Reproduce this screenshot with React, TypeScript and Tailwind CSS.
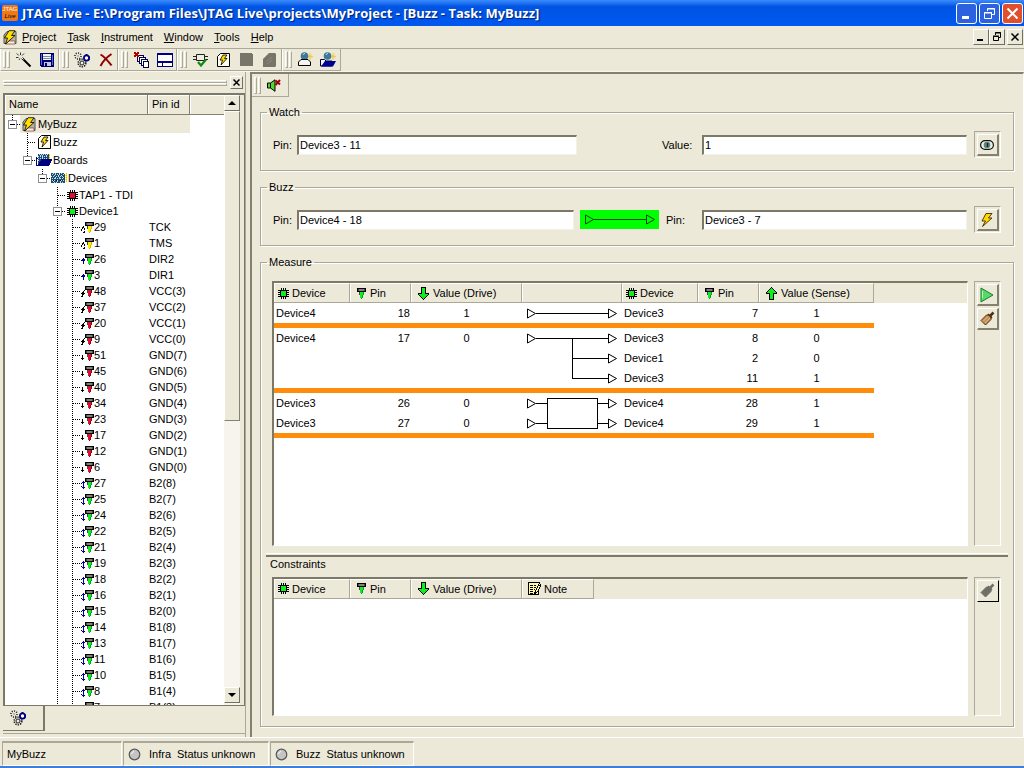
import type { ReactNode } from 'react'

const palette: Record<string, string> = {
  k: '#000000',
  w: '#ffffff',
  g: '#10ee20',
  d: '#0a9a2a',
  r: '#e0102c',
  m: '#900018',
  y: '#fff200',
  o: '#e0b000',
  n: '#000080',
  b: '#3c64c8',
  t: '#18506e',
  s: '#808080',
  x: '#484848',
  l: '#c8d8f0',
  p: '#fff8a0',
}

// Small bitmap icon, one letter per pixel
function Sprite({ rows }: { rows: string[] }) {
  const width = Math.max(...rows.map((r) => r.length))
  return (
    <svg
      width={width}
      height={rows.length}
      viewBox={`0 0 ${width} ${rows.length}`}
      shapeRendering="crispEdges"
      className="shrink-0"
      aria-hidden="true"
    >
      {rows.flatMap((row, y) =>
        [...row].map((ch, x) =>
          palette[ch] ? <rect key={`${x}-${y}`} x={x} y={y} width={1} height={1} fill={palette[ch]} /> : null
        )
      )}
    </svg>
  )
}

const chipRows = (c: string) =>
  [
    '...k.k.k...',
    '...k.k.k...',
    'kkkkkkkkkkk',
    '..kCCCCCk..',
    'kkkCCCCCkkk',
    '..kCCCCCk..',
    'kkkCCCCCkkk',
    '..kCCCCCk..',
    'kkkkkkkkkkk',
    '...k.k.k...',
    '...k.k.k...',
  ].map((r) => r.replace(/C/g, c))

const pinBody = (c: string, d: string) =>
  [
    'kkkkkkkkk',
    'kxsssssxk',
    'kxsssssxk',
    'kkkkkkkkk',
    '..xCCCD..',
    '..xCCCD..',
    '..xCCCD..',
    '...CCD...',
    '...CCD...',
    '...CCD...',
    '....D....',
  ].map((r) => r.replace(/C/g, c).replace(/D/g, d))

type PinKind = 'clock' | 'in' | 'power' | 'ground' | 'both'

const pinMarks: Record<PinKind, string[]> = {
  clock: ['....', '....', '....', '....', '..k.', '.kk.', '.k.k', 'k..k', 'k...', '...k', '..kk'],
  in: ['....', '....', '....', '....', '..n.', '.nnn', 'nnnn', '..n.', '..n.', '..n.', '....'],
  power: ['....', '....', '....', '....', '...k', '..k.', '.kk.', 'kkkk', '.kk.', '.k..', 'kk..'],
  ground: ['....', '....', '....', '....', '....', '.k..', '.k..', '.k..', 'kkk.', '.k..', '....'],
  both: ['....', '....', '....', '..n.', '.nnn', 'n.n.', '..n.', '..n.', 'n.n.', '.nnn', '..n.'],
}

const pinColors: Record<PinKind, [string, string]> = {
  clock: ['y', 'o'],
  in: ['g', 'd'],
  power: ['r', 'm'],
  ground: ['r', 'm'],
  both: ['g', 'd'],
}

function PinIcon({ kind }: { kind: PinKind }) {
  const body = pinBody(...pinColors[kind])
  return <Sprite rows={pinMarks[kind].map((r, i) => r + body[i])} />
}

const arrowDown = [
  '...kkkkk...',
  '...kgggk...',
  '...kgggk...',
  '...kgggk...',
  '...kgggk...',
  '...kgggk...',
  'kkkkgggkkkk',
  'kgggggggggk',
  '.kgggggggk.',
  '..kgggggk..',
  '...kgggk...',
  '....kgk....',
  '.....k.....',
]

const noteRows = [
  'kkkkkkkkkkkk.',
  'kppppppppppk.',
  'kpppppppppkpk',
  'kpkkkpkkppkkk',
  'kppppppppkppk',
  'kpkkkpkkpkpk.',
  'kpppppppkppk.',
  'kpkkkpkpkpk..',
  'kppppppkppk..',
  'kpkkkppkpkk..',
  'kpppppkkkpk..',
  'kpkkkpkkppk..',
  'kkkkkkkkkkk..',
]

const boardRows = [
  'ttltltttltltt..o',
  'tlttltltltttlt.y',
  'tttltttlttltttyo',
  'ltlttltltltltt.y',
  'ttttltttltttltyo',
  'tltlltltlltltt.y',
  'ttttttttttttttyo',
  'tlkltklttkltlt.y',
  'ttltttlttltttt.o',
  'tttltltttltltt..',
]

const boardsRows = [
  '..tltltltltlty..',
  '..ttltltttltto..',
  '..ltltltltltty..',
  'n.ttttltttttto..',
  'nnltltltltltty..',
  'nwtttnnnnnnnnnnn',
  'nwlttnnnnnnnnnnn',
  'nwttnnnnnnnnnnn.',
  'nwtnnnnnnnnnnnn.',
  'nwtnnnnnnnnnnn..',
  'nwnnnnnnnnnnnn..',
  'nnnnnnnnnnnnn...',
]

function TaskIcon() {
  return (
    <svg width="13" height="14" viewBox="0 0 13 14" className="shrink-0" aria-hidden="true">
      <path d="M3.500 .5H12.500V13.500H.5V3.500Z" fill="#fffef0" stroke="#000" />
      <path d="M6 2h4L7.500 5.500H10L4 12l1.500-5H3Z" fill="#ffd800" stroke="#000" strokeWidth=".8" />
    </svg>
  )
}

function ProjectIcon() {
  return (
    <svg width="14" height="15" viewBox="0 0 14 15" className="shrink-0" aria-hidden="true">
      <path d="M4 1.500h9v12H1V5Z" fill="#b8b4a4" stroke="#55524a" />
      <path d="M6 11h6v3H3Z" fill="#f8f0e8" stroke="#702020" strokeWidth=".6" />
      <path d="M6 .7h6L8.500 5.500h3.500L2.500 14l2-6H1.500Z" fill="#ffe000" stroke="#000" strokeWidth=".8" />
    </svg>
  )
}

function GearsIcon() {
  return (
    <svg width="17" height="16" viewBox="0 0 17 16" className="shrink-0" aria-hidden="true">
      <circle cx="4" cy="4" r="3" fill="none" stroke="#222" strokeWidth="1.600" strokeDasharray="1 1.300" />
      <rect x="3.500" y="3.500" width="1" height="1" fill="#222" />
      <circle cx="8" cy="11" r="3.800" fill="none" stroke="#222" strokeWidth="1.600" strokeDasharray="1.400 1" />
      <circle cx="8" cy="11" r="2" fill="#eee" stroke="#222" />
      <circle cx="12.500" cy="6" r="2.600" fill="#fff" stroke="#000080" strokeWidth="1.800" />
      <path d="M11.500 2.500h2M15.500 4.500v3" stroke="#000080" />
    </svg>
  )
}

function WandIcon() {
  return (
    <svg width="16" height="16" viewBox="0 0 16 16" aria-hidden="true">
      <path d="M6 6l8.500 8.500" stroke="#000" strokeWidth="2" />
      <path d="M4.500 .5v2.500M.8 1.500l2 2M0 5.500h2.500M8 1.500l-2 2M3 8l.8-1.500" stroke="#333" />
      <path d="M5.500 5.500l2 2" stroke="#fff" />
    </svg>
  )
}

function SaveIcon() {
  return (
    <svg width="14" height="14" viewBox="0 0 14 14" shapeRendering="crispEdges" aria-hidden="true">
      <path d="M0 0h14v14H1l-1-1Z" fill="#000070" />
      <path d="M1 1h1v11H1zM12 2h1v10h-1z" fill="#5070d0" />
      <path d="M3 1h8v6H3z" fill="#f4f4f4" />
      <path d="M3 3h8v1H3zM3 5h8v1H3z" fill="#7c8cb0" />
      <path d="M4 9h7v4H4z" fill="#c0c8e0" />
      <path d="M5 10h2v3H5z" fill="#000070" />
    </svg>
  )
}

function CrossIcon() {
  return (
    <svg width="14" height="14" viewBox="0 0 14 14" aria-hidden="true">
      <path d="M1.500 1.500C6 4 9 8 12.500 12.500M12.500 1C8 4 4 8 1.500 13" fill="none" stroke="#900000" strokeWidth="2" />
    </svg>
  )
}

function CascadeIcon() {
  return (
    <svg width="16" height="16" viewBox="0 0 16 16" shapeRendering="crispEdges" aria-hidden="true">
      <g fill="#fff" stroke="#000050">
        <path d="M3.500 3.500h6v6h-6z" />
        <path d="M5.500 5.500h6v6h-6z" />
        <path d="M7.500 7.500h6v6h-6z" />
        <path d="M9.500 9.500h5v6h-5z" />
      </g>
      <path d="M0 0h2v1h1V0h2v2H4v1h1v2H3V4H2v1H0V3h1V2H0Z" fill="#b00000" />
    </svg>
  )
}

function PanesIcon() {
  return (
    <svg width="16" height="14" viewBox="0 0 16 14" shapeRendering="crispEdges" aria-hidden="true">
      <path d="M0 0h16v14H0z" fill="#000080" />
      <path d="M1 2h14v6H1zM1 10h4v3H1zM6 10h9v3H6z" fill="#fff" />
    </svg>
  )
}

function CheckChipIcon() {
  return (
    <svg width="15" height="14" viewBox="0 0 15 14" aria-hidden="true">
      <path d="M0 3.500h15M0 6.500h3M12 6.500h3" stroke="#222" />
      <path d="M3.500 1.500h8v6h-8z" fill="#e8f0e0" stroke="#222" />
      <path d="M5 9l3 3.500L13 6.500" fill="none" stroke="#108a10" strokeWidth="2.200" />
    </svg>
  )
}

function ImportIcon({ open }: { open?: boolean }) {
  return (
    <svg width="17" height="15" viewBox="0 0 17 15" aria-hidden="true">
      <path d="M13 1v7M10 4.500h6M11 2.500l4 4M15 2.500l-4 4" stroke="#f0c840" strokeWidth=".9" />
      <circle cx="7.500" cy="4" r="3.800" fill="#3c7898" />
      <path d="M6 3a2 2 0 0 1 2-1.500" stroke="#b8dce8" fill="none" />
      {open ? (
        <>
          <path d="M.5 14V7.500h4L6 9h6v5Z" fill="#f4f4f4" stroke="#000040" />
          <path d="M1 14.500L5 9h11l-3 5.500Z" fill="#000090" />
        </>
      ) : (
        <path d="M1.500 13.500V10L4 7.500h7l2.500 2.500v3.500Z" fill="#f4f4f4" stroke="#000" />
      )}
    </svg>
  )
}

function MuteIcon() {
  return (
    <svg width="15" height="13" viewBox="0 0 15 13" aria-hidden="true">
      <path d="M.5 4h3L8 .8v11.500L3.500 9h-3Z" fill="#50d830" stroke="#000" />
      <path d="M3.500 4v5" stroke="#000" />
      <path d="M8.500 1.500l4.500 4M13 1l-4.500 5" stroke="#a00010" strokeWidth="2" />
    </svg>
  )
}

function EyeIcon() {
  return (
    <svg width="14" height="10" viewBox="0 0 14 10" aria-hidden="true">
      <rect x=".6" y=".6" width="12.800" height="8.800" rx="4.400" fill="#e8f0e8" stroke="#111" strokeWidth="1.200" />
      <circle cx="7" cy="5" r="3.300" fill="#5c8478" />
      <path d="M7.500 3v4" stroke="#102820" strokeWidth="1.400" />
    </svg>
  )
}

function BoltIcon() {
  return (
    <svg width="12" height="14" viewBox="0 0 12 14" aria-hidden="true">
      <path d="M5 .5h6L7.500 5H11L1.500 13.500 4.500 8H1Z" fill="#ffd800" stroke="#402800" strokeWidth=".9" />
    </svg>
  )
}

function PlayIcon() {
  return (
    <svg width="14" height="16" viewBox="0 0 14 16" aria-hidden="true">
      <path d="M1 1l12 7-12 7Z" fill="#58d868" stroke="#188028" />
      <path d="M2.500 4v7" stroke="#b8f4c0" />
    </svg>
  )
}

function BrushIcon({ disabled }: { disabled?: boolean }) {
  const fill = disabled ? '#6f6f67' : '#c09058'
  const stroke = disabled ? '#6f6f67' : '#503010'
  return (
    <svg width="15" height="15" viewBox="0 0 15 15" aria-hidden="true">
      <path d="M9.500 5.500L13.500 1.500" stroke={stroke} strokeWidth="2.500" />
      <path d="M1 9.500L6.500 4h3l1.500 1.500v3L5.500 14Z" fill={fill} stroke={stroke} />
      <path d="M8 3l4 4" stroke={stroke} strokeWidth="1.500" />
      {!disabled && <path d="M3 10.500l5-5M5 12l5-5" stroke="#e0b880" />}
    </svg>
  )
}

type Level = {
  label: string
  net?: string
  icon: ReactNode
  depth: number
  guides: boolean[]
  last?: boolean
  expander?: boolean
  tall?: boolean
  selected?: boolean
}

const pins: [string, string, PinKind][] = [
  ['29', 'TCK', 'clock'],
  ['1', 'TMS', 'clock'],
  ['26', 'DIR2', 'in'],
  ['3', 'DIR1', 'in'],
  ['48', 'VCC(3)', 'power'],
  ['37', 'VCC(2)', 'power'],
  ['20', 'VCC(1)', 'power'],
  ['9', 'VCC(0)', 'power'],
  ['51', 'GND(7)', 'ground'],
  ['45', 'GND(6)', 'ground'],
  ['40', 'GND(5)', 'ground'],
  ['34', 'GND(4)', 'ground'],
  ['23', 'GND(3)', 'ground'],
  ['17', 'GND(2)', 'ground'],
  ['12', 'GND(1)', 'ground'],
  ['6', 'GND(0)', 'ground'],
  ['27', 'B2(8)', 'both'],
  ['25', 'B2(7)', 'both'],
  ['24', 'B2(6)', 'both'],
  ['22', 'B2(5)', 'both'],
  ['21', 'B2(4)', 'both'],
  ['19', 'B2(3)', 'both'],
  ['18', 'B2(2)', 'both'],
  ['16', 'B2(1)', 'both'],
  ['15', 'B2(0)', 'both'],
  ['14', 'B1(8)', 'both'],
  ['13', 'B1(7)', 'both'],
  ['11', 'B1(6)', 'both'],
  ['10', 'B1(5)', 'both'],
  ['8', 'B1(4)', 'both'],
  ['7', 'B1(3)', 'both'],
]

const tree: Level[] = [
  { label: 'MyBuzz', icon: <ProjectIcon />, depth: 0, guides: [], last: true, expander: true, tall: true, selected: true },
  { label: 'Buzz', icon: <TaskIcon />, depth: 1, guides: [false], tall: true },
  { label: 'Boards', icon: <Sprite rows={boardsRows} />, depth: 1, guides: [false], last: true, expander: true, tall: true },
  { label: 'Devices', icon: <Sprite rows={boardRows} />, depth: 2, guides: [false, false], last: true, expander: true, tall: true },
  { label: 'TAP1 - TDI', icon: <Sprite rows={chipRows('r')} />, depth: 3, guides: [false, false, false] },
  { label: 'Device1', icon: <Sprite rows={chipRows('g')} />, depth: 3, guides: [false, false, false], expander: true },
  ...pins.map(([label, net, kind]) => ({
    label,
    net,
    icon: <PinIcon kind={kind} />,
    depth: 4,
    guides: [false, false, false, true],
  })),
]

type TreeLinesProps = { line?: boolean; elbow?: boolean; last?: boolean; expander?: boolean; tall?: boolean }

function TreeLines({ line, elbow, last, expander, tall }: TreeLinesProps) {
  const h = tall ? 18 : 16
  const mid = h / 2
  return (
    <svg width="15" height={h} viewBox={`0 0 15 ${h}`} shapeRendering="crispEdges" className="shrink-0" aria-hidden="true">
      {(line || elbow) && <path d={`M7.500 0V${last ? mid : h}`} stroke="#000" strokeDasharray="1 1" />}
      {elbow && <path d={`M8 ${mid + 0.5}H15`} stroke="#000" strokeDasharray="1 1" />}
      {expander && (
        <>
          <rect x="3.500" y={mid - 3.5} width="8" height="8" fill="#fff" stroke="#909090" />
          <path d={`M5 ${mid + 0.5}h5`} stroke="#000" />
        </>
      )}
    </svg>
  )
}

function TreeRow({ item }: { item: Level }) {
  return (
    <li role="treeitem" aria-level={item.depth + 1} className={`flex items-center ${item.tall ? 'h-[18px]' : 'h-4'}`}>
      {item.guides.map((on, i) => (
        <TreeLines key={i} line={on} tall={item.tall} />
      ))}
      <TreeLines elbow last={item.last} expander={item.expander} tall={item.tall} />
      <span className={`flex h-full flex-1 items-center ${item.selected ? 'mr-[34px] bg-[#ece9d8]' : ''}`}>
        <span className={`flex shrink-0 justify-center ${item.tall ? 'w-[18px]' : 'w-[14px]'}`}>{item.icon}</span>
        <span className="flex-1">{item.label}</span>
        {item.net && <span className="w-[75px]">{item.net}</span>}
      </span>
    </li>
  )
}

function Grip() {
  return (
    <span className="mr-px ml-0.5 flex gap-px">
      <span className="h-[17px] w-[3px] border border-l-white border-t-white border-r-[#aca899] border-b-[#aca899]" />
      <span className="h-[17px] w-[3px] border border-l-white border-t-white border-r-[#aca899] border-b-[#aca899]" />
    </span>
  )
}

function ToolGroup({ children }: { children: ReactNode }) {
  return (
    <div className="flex items-center border-r border-b border-[#aca899] border-l border-l-white">
      <Grip />
      {children}
    </div>
  )
}

function ToolButton({ label, children }: { label: string; children: ReactNode }) {
  return (
    <button aria-label={label} className="flex h-5 w-[23px] items-center justify-center first-of-type:ml-px">
      {children}
    </button>
  )
}

function SideButton({ label, children, dark }: { label: string; children: ReactNode; dark?: boolean }) {
  return (
    <button
      aria-label={label}
      className={`flex h-[22px] w-[22px] shrink-0 items-center justify-center border border-t-white border-l-white ${
        dark ? 'border-r-black border-b-black' : 'border-r-2 border-b-2 border-r-[#85816f] border-b-[#85816f]'
      }`}
    >
      {children}
    </button>
  )
}

function SideBar({ children }: { children: ReactNode }) {
  return (
    <div className="flex w-[27px] shrink-0 flex-col items-center gap-0.5 border border-t-[#aca899] border-r-white border-b-white border-l-[#aca899] pt-0.5 pb-px">
      {children}
    </div>
  )
}

function Group({ title, className, children }: { title: string; className: string; children: ReactNode }) {
  return (
    <fieldset
      className={`min-w-0 border border-[#aca899] px-3 pt-3 shadow-[1px_1px_0_#fff,inset_1px_1px_0_#fff] ${className}`}
    >
      <legend className="-ml-[6px] px-0.5 leading-[14px]">{title}</legend>
      {children}
    </fieldset>
  )
}

const field =
  'h-5 min-w-0 border border-t-2 border-l-2 border-t-[#7c7968] border-l-[#7c7968] border-r-[#f4f2e8] border-b-[#f4f2e8] bg-white pl-px outline-none'

function HeadCell({ icon, label, pad }: { icon?: ReactNode; label?: string; pad?: string }) {
  return (
    <th className="h-5 border-t border-r border-b border-[#aca899] border-t-white p-0 text-left font-normal shadow-[inset_1px_0_0_#fff]">
      <span className={`flex items-center ${pad ?? ''}`}>
        {icon}
        {label}
      </span>
    </th>
  )
}

const deviceHead = <HeadCell icon={<Sprite rows={chipRows('g')} />} label="Device" pad="pl-1 gap-[3px]" />
const pinHead = <HeadCell icon={<Sprite rows={pinBody('g', 'd')} />} label="Pin" pad="pl-[7px] gap-1" />
const driveHead = <HeadCell icon={<Sprite rows={arrowDown} />} label="Value (Drive)" pad="pl-[7px] gap-1" />

type Side = [device: string, pin: number, value: number]

const measures: { drive: Side[]; sense: Side[]; wires: string }[] = [
  { drive: [['Device4', 18, 1]], sense: [['Device3', 7, 1]], wires: 'M14 10.500H86' },
  {
    drive: [['Device4', 17, 0]],
    sense: [
      ['Device3', 8, 0],
      ['Device1', 2, 0],
      ['Device3', 11, 1],
    ],
    wires: 'M14 10.500H86M50.500 10V51M50 30.500H86M50 50.500H86',
  },
  {
    drive: [
      ['Device3', 26, 0],
      ['Device3', 27, 0],
    ],
    sense: [
      ['Device4', 28, 1],
      ['Device4', 29, 1],
    ],
    wires: 'M14 10.500H25M76 10.500H86M14 30.500H25M76 30.500H86M25.500 5.500h50v30h-50Z',
  },
]

function Wires({ d, from, to }: { d: string; from: number; to: number }) {
  const rows = Math.max(from, to)
  return (
    <svg width="100" height={rows * 20} viewBox={`0 0 100 ${rows * 20}`} className="block" fill="none" stroke="#000" aria-hidden="true">
      <path d={d} shapeRendering="crispEdges" />
      {Array.from({ length: from }, (_, i) => (
        <path key={`f${i}`} d={`M5.500 ${i * 20 + 6}v9l8-4.500Z`} />
      ))}
      {Array.from({ length: to }, (_, i) => (
        <path key={`t${i}`} d={`M86.500 ${i * 20 + 6}v9l8-4.500Z`} />
      ))}
    </svg>
  )
}

function SideCells({ side }: { side?: Side }) {
  return (
    <>
      <td className="h-5 p-0 pl-0.5">{side?.[0]}</td>
      <td className="p-0 pr-px text-right">{side?.[1]}</td>
      <td className="p-0 text-center">{side?.[2]}</td>
    </>
  )
}

const sunken =
  'min-w-0 flex-1 border border-t-2 border-l-2 border-t-[#7c7968] border-l-[#7c7968] border-r-white border-b-white bg-white'

function MeasureTable() {
  return (
    <table className="w-full table-fixed border-separate border-spacing-0">
      <colgroup>
        <col className="w-[76px]" />
        <col className="w-[61px]" />
        <col className="w-[111px]" />
        <col className="w-[100px]" />
        <col className="w-[76px]" />
        <col className="w-[61px]" />
        <col className="w-[115px]" />
        <col />
      </colgroup>
      <thead className="bg-[#ece9d8]">
        <tr>
          {deviceHead}
          {pinHead}
          {driveHead}
          <HeadCell />
          {deviceHead}
          {pinHead}
          <HeadCell icon={<Sprite rows={[...arrowDown].reverse()} />} label="Value (Sense)" pad="pl-[7px] gap-1" />
          <td />
        </tr>
      </thead>
      {measures.map((m, n) => (
        <tbody key={n}>
          {m.sense.map((sense, i) => (
            <tr key={i}>
              <SideCells side={m.drive[i]} />
              {i === 0 && (
                <td rowSpan={m.sense.length} className="p-0">
                  <Wires d={m.wires} from={m.drive.length} to={m.sense.length} />
                </td>
              )}
              <SideCells side={sense} />
            </tr>
          ))}
          <tr>
            <td colSpan={7} className="h-[5px] bg-[#ff8c0a] p-0" />
          </tr>
        </tbody>
      ))}
    </table>
  )
}

function ConstraintsTable() {
  return (
    <table className="w-full table-fixed border-separate border-spacing-0">
      <colgroup>
        <col className="w-[76px]" />
        <col className="w-[61px]" />
        <col className="w-[111px]" />
        <col className="w-[72px]" />
        <col />
      </colgroup>
      <thead className="bg-[#ece9d8]">
        <tr>
          {deviceHead}
          {pinHead}
          {driveHead}
          <HeadCell icon={<Sprite rows={noteRows} />} label="Note" pad="pl-[6px] gap-[3px]" />
          <td />
        </tr>
      </thead>
    </table>
  )
}

function ScrollButton({ label, points }: { label: string; points: string }) {
  return (
    <button
      aria-label={label}
      className="flex h-4 items-center justify-center border border-t-white border-l-white border-r-[#716f64] border-b-[#716f64] bg-[#ece9d8]"
    >
      <svg width="8" height="4" viewBox="0 0 8 4" aria-hidden="true">
        <polygon points={points} />
      </svg>
    </button>
  )
}

function TreePanel() {
  return (
    <aside className="flex w-[246px] shrink-0 flex-col border-r border-[#aca899] pb-[3px] pl-[3px]">
      <div className="flex h-[21px] shrink-0 items-center gap-[3px] pr-0.5">
        <div className="flex-1">
          <div className="h-[3px] border border-t-white border-l-white border-r-[#aca899] border-b-[#aca899]" />
          <div className="h-[3px] border border-t-white border-l-white border-r-[#aca899] border-b-[#aca899]" />
        </div>
        <button
          aria-label="Close panel"
          className="flex h-[13px] w-[13px] items-center justify-center border border-t-white border-l-white border-r-[#716f64] border-b-[#716f64]"
        >
          <svg width="7" height="7" viewBox="0 0 7 7" aria-hidden="true">
            <path d="M.5 .5l6 6M6.500 .5l-6 6" stroke="#000" strokeWidth="1.500" />
          </svg>
        </button>
      </div>
      <div className="flex min-h-0 flex-1 border border-t-2 border-l-2 border-t-[#7c7968] border-l-[#7c7968] border-r-[#7c7968] border-b-[#7c7968] bg-[#ece9d8] pr-1">
        <div className="flex min-h-0 min-w-0 flex-1 flex-col bg-white">
          <div className="flex h-5 shrink-0 bg-[#ece9d8] leading-[18px]">
            <span className="flex-1 border-r border-b border-[#85816f] pl-1 shadow-[inset_1px_1px_0_#fff]">Name</span>
            <span className="w-[42px] border-r border-b border-[#85816f] pl-1 shadow-[inset_1px_1px_0_#fff]">Pin id</span>
            <span className="w-[34px] border-b border-[#85816f] shadow-[inset_1px_1px_0_#fff]" />
          </div>
          <ul role="tree" className="min-h-0 flex-1 overflow-hidden">
            {tree.map((item) => (
              <TreeRow key={item.label + (item.net ?? '')} item={item} />
            ))}
          </ul>
        </div>
        <div className="flex w-4 shrink-0 flex-col bg-[#f6f4ec] pb-0.5">
          <ScrollButton label="Scroll up" points="0,4 4,0 8,4" />
          <div className="flex-[309] border border-t-white border-l-white border-r-[#85816f] border-b-[#85816f] bg-[#ece9d8]" />
          <div className="flex-[266]" />
          <ScrollButton label="Scroll down" points="0,0 4,4 8,0" />
        </div>
      </div>
      <div className="flex h-[28px] shrink-0 border-b border-[#aca899]">
        <button
          aria-label="Tasks"
          className="flex h-[25px] w-[42px] items-center border-r-2 border-b border-[#7c7968] pl-[7px]"
        >
          <GearsIcon />
        </button>
      </div>
    </aside>
  )
}

function TitleBar() {
  const base = 'flex h-[21px] w-[21px] items-center justify-center rounded-[3px] border border-white'
  return (
    <header className="flex h-[26px] shrink-0 items-center bg-linear-to-b from-[#3a8cff] via-[#0054e3] via-25% to-[#0058f0] pr-px pl-0.5 text-white">
      <span className="flex h-4 w-4 flex-col justify-center rounded-[2px] bg-[#f07818] text-center text-[6px] leading-[7px]">
        <span>JTAG</span>
        <span className="text-black italic">Live</span>
      </span>
      <h1 className="ml-1 flex-1 font-['Open_Sans',sans-serif] text-[13px] leading-5 font-bold whitespace-nowrap [text-shadow:1px_1px_1px_#00207a]">
        JTAG Live - E:\Program Files\JTAG Live\projects\MyProject - [Buzz - Task: MyBuzz]
      </h1>
      <div className="flex gap-0.5">
        <button aria-label="Minimize" className={`${base} bg-[#2c62e0]`}>
          <svg width="13" height="13" viewBox="0 0 13 13" aria-hidden="true">
            <path d="M2 9h7v3H2z" fill="#fff" />
          </svg>
        </button>
        <button aria-label="Restore" className={`${base} bg-[#2c62e0]`}>
          <svg width="13" height="13" viewBox="0 0 13 13" fill="none" stroke="#fff" aria-hidden="true">
            <path d="M4.500 4V1.500h7v6H9M4 2h8" />
            <path d="M1.500 5.500h7v6h-7zM1 6h8" />
          </svg>
        </button>
        <button aria-label="Close" className={`${base} bg-[#e0502c]`}>
          <svg width="13" height="13" viewBox="0 0 13 13" aria-hidden="true">
            <path d="M1.500 1.500l10 10M11.500 1.500l-10 10" stroke="#fff" strokeWidth="2" />
          </svg>
        </button>
      </div>
    </header>
  )
}

const menus = ['Project', 'Task', 'Instrument', 'Window', 'Tools', 'Help']

function MenuBar() {
  const base =
    'flex h-4 w-4 items-center justify-center border border-t-white border-l-white border-r-[#716f64] border-b-[#716f64]'
  return (
    <nav className="flex h-[23px] shrink-0 items-center border-b border-[#aca899] pr-px pl-[3px]">
      <ProjectIcon />
      <div className="ml-[5px] flex flex-1 gap-[11px]">
        {menus.map((menu) => (
          <button key={menu}>
            <span className="underline">{menu[0]}</span>
            {menu.slice(1)}
          </button>
        ))}
      </div>
      <button aria-label="Minimize window" className={base}>
        <svg width="10" height="10" viewBox="0 0 10 10" aria-hidden="true">
          <path d="M1 7h6v2H1z" />
        </svg>
      </button>
      <button aria-label="Restore window" className={base}>
        <svg width="10" height="10" viewBox="0 0 10 10" fill="none" stroke="#000" aria-hidden="true">
          <path d="M3.500 3V.5h5v5H7M3 1h6M1.500 4.500h5v4h-5zM1 4h6" />
        </svg>
      </button>
      <button aria-label="Close window" className={`${base} ml-0.5`}>
        <svg width="10" height="10" viewBox="0 0 10 10" aria-hidden="true">
          <path d="M1.500 1.500l7 7M8.500 1.500l-7 7" stroke="#000" strokeWidth="1.500" />
        </svg>
      </button>
    </nav>
  )
}

function ToolBar() {
  return (
    <div className="flex h-[23px] shrink-0 border-b border-[#f8f6ee]">
      <ToolGroup>
        <ToolButton label="Wizard"><WandIcon /></ToolButton>
        <ToolButton label="Save"><SaveIcon /></ToolButton>
      </ToolGroup>
      <ToolGroup>
        <ToolButton label="Settings"><GearsIcon /></ToolButton>
        <ToolButton label="Delete"><CrossIcon /></ToolButton>
      </ToolGroup>
      <ToolGroup>
        <ToolButton label="Close all"><CascadeIcon /></ToolButton>
        <ToolButton label="Panes"><PanesIcon /></ToolButton>
      </ToolGroup>
      <ToolGroup>
        <ToolButton label="Check infra"><CheckChipIcon /></ToolButton>
        <ToolButton label="Buzz"><TaskIcon /></ToolButton>
        <ToolButton label="Measure">
          <svg width="13" height="13" viewBox="0 0 13 13" aria-hidden="true">
            <path d="M0 0h12v1h1v12H0Z" fill="#77756a" />
          </svg>
        </ToolButton>
        <ToolButton label="Sample">
          <svg width="13" height="14" viewBox="0 0 13 14" aria-hidden="true">
            <path d="M3 3l3-3h6l1 1v12l-1 1H0V6Z" fill="#77756a" />
            <path d="M4 8l5-4M4 11l5-4" stroke="#8c8a80" />
          </svg>
        </ToolButton>
      </ToolGroup>
      <ToolGroup>
        <ToolButton label="Import"><ImportIcon /></ToolButton>
        <ToolButton label="Open"><ImportIcon open /></ToolButton>
      </ToolGroup>
    </div>
  )
}

function StatusPane({ name, text, className }: { name: string; text?: string; className: string }) {
  return (
    <div className={`flex items-center border border-t-2 border-t-[#aca899] border-l-[#aca899] border-r-white border-b-white pl-1 ${className}`}>
      {text && (
        <svg width="13" height="13" viewBox="0 0 13 13" className="mr-2" aria-hidden="true">
          <circle cx="6.500" cy="6.500" r="5.300" fill="#c4c4c4" stroke="#555" strokeWidth="1.200" />
          <path d="M3.500 6a3 3 0 0 1 2.500-2.500" stroke="#fff" fill="none" />
        </svg>
      )}
      <span>{name}</span>
      {text && <span className="ml-1.5">{text}</span>}
    </div>
  )
}

export default function App() {
  return (
    <div className="flex h-screen flex-col overflow-hidden bg-[#ece9d8] font-['Liberation_Sans',Arial,sans-serif] text-[11px] leading-[14px] text-black">
      <TitleBar />
      <MenuBar />
      <ToolBar />
      <div className="flex min-h-0 flex-1">
        <TreePanel />
        <main className="ml-1 flex min-w-0 flex-1 flex-col border-t-2 border-r border-l-2 border-t-[#85816f] border-r-white border-l-[#85816f]">
          <div className="flex h-[23px] w-[37px] shrink-0 items-center border-r border-b border-[#aca899]">
            <Grip />
            <button aria-label="Mute" className="ml-[5px]">
              <MuteIcon />
            </button>
          </div>
          <div className="flex min-h-0 flex-1 flex-col gap-[9px] pt-2 pr-[9px] pb-[10px] pl-2">
            <Group title="Watch" className="shrink-0 pb-3">
              <div className="grid grid-cols-[24px_280fr_125px_265fr_34px] items-center">
                <label htmlFor="watch-pin">Pin:</label>
                <input id="watch-pin" defaultValue="Device3 - 11" className={field} />
                <label htmlFor="watch-value" className="pl-[85px]">Value:</label>
                <input id="watch-value" defaultValue="1" className={field} />
                <div className="flex justify-end">
                  <SideBar>
                    <SideButton label="Watch pin"><EyeIcon /></SideButton>
                  </SideBar>
                </div>
              </div>
            </Group>
            <Group title="Buzz" className="shrink-0 pb-3">
              <div className="grid grid-cols-[24px_277fr_128px_265fr_34px] items-center">
                <label htmlFor="buzz-from">Pin:</label>
                <input id="buzz-from" defaultValue="Device4 - 18" className={field} />
                <div className="flex items-center gap-[7px] pl-[6px]">
                  <svg width="79" height="19" viewBox="0 0 79 19" className="bg-[#00ff00]" fill="none" stroke="#004000" aria-hidden="true">
                    <path d="M13 9.500H66" shapeRendering="crispEdges" />
                    <path d="M5.500 5v9l8-4.500Z M66.500 5v9l8-4.500Z" />
                  </svg>
                  <label htmlFor="buzz-to">Pin:</label>
                </div>
                <input id="buzz-to" defaultValue="Device3 - 7" className={field} />
                <div className="flex justify-end">
                  <SideBar>
                    <SideButton label="Start buzz"><BoltIcon /></SideButton>
                  </SideBar>
                </div>
              </div>
            </Group>
            <Group title="Measure" className="min-h-0 flex-1 pb-[10px]">
              <div className="-mx-[7px] flex h-full flex-col">
                <div className="flex min-h-0 flex-[264] gap-[6px] pr-[7px] pl-[6px]">
                  <div className={sunken}>
                    <MeasureTable />
                  </div>
                  <SideBar>
                    <SideButton label="Run measurement"><PlayIcon /></SideButton>
                    <SideButton label="Clear measurements"><BrushIcon /></SideButton>
                  </SideBar>
                </div>
                <div className="mt-[7px] h-1 shrink-0 border-t border-b-2 border-t-white border-b-[#7c7968]" />
                <h2 className="mb-[6px] shrink-0 pl-1">Constraints</h2>
                <div className="flex min-h-0 flex-[139] gap-[6px] pr-[7px] pl-[6px]">
                  <div className={sunken}>
                    <ConstraintsTable />
                  </div>
                  <SideBar>
                    <SideButton label="Clear constraints" dark><BrushIcon disabled /></SideButton>
                  </SideBar>
                </div>
              </div>
            </Group>
          </div>
        </main>
      </div>
      <footer className="flex h-[31px] shrink-0 gap-px border-t border-b-2 border-t-white border-b-[#3c7fd8] pt-[3px] pl-0.5">
        <StatusPane name="MyBuzz" className="w-[120px]" />
        <StatusPane name="Infra" text="Status unknown" className="w-[146px]" />
        <StatusPane name="Buzz" text="Status unknown" className="w-[144px]" />
      </footer>
    </div>
  )
}
